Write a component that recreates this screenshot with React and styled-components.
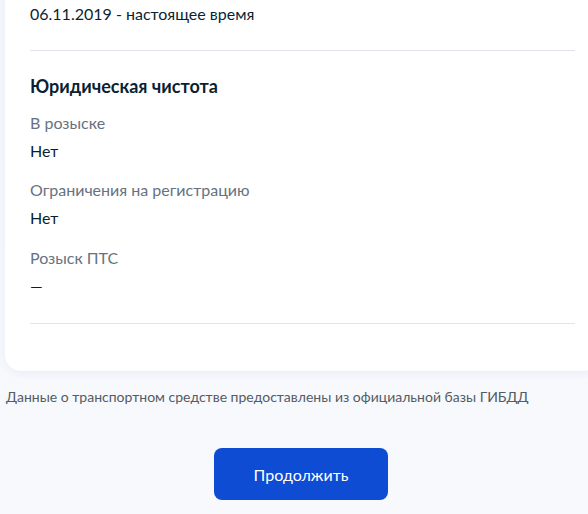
import styled, { createGlobalStyle } from 'styled-components';

const GlobalStyle = createGlobalStyle`
  html, body {
    margin: 0;
    padding: 0;
    overflow: hidden;
  }
  body {
    background: linear-gradient(180deg, #f5f7fb 0%, #f7f9fd 100%);
    font-family: Lato, 'Noto Sans', sans-serif;
    color: #0b1f33;
    width: 588px;
    height: 514px;
  }
`;

const Page = styled.main`
  display: flex;
  flex-direction: column;
  width: 588px;
`;

const Card = styled.section`
  margin: -22px 0 0 5px;
  width: 545px;
  padding: 24px 24px 47px 25px;
  background: #ffffff;
  border-radius: 0 0 16px 16px;
  box-shadow: 0 2px 10px rgba(14, 52, 112, 0.06);
  flex-shrink: 0;
`;

const Value = styled.div`
  font-size: 16px;
  line-height: 24px;
  color: #0b1f33;
  margin-top: ${(p) => p.$gap || 0}px;
`;

const Label = styled.div`
  font-size: 16px;
  line-height: 24px;
  color: #66727f;
  margin-top: ${(p) => p.$gap || 0}px;
`;

const Divider = styled.hr`
  border: 0;
  height: 1px;
  background: #e1e5eb;
  margin: ${(p) => p.$gap || 24}px 0 0;
`;

const Title = styled.h3`
  margin: 23px 0 0;
  font-size: 18px;
  line-height: 24px;
  font-weight: 700;
  color: #0b1f33;
`;

const Note = styled.p`
  margin: 16px 0 0 6px;
  font-size: 14px;
  line-height: 20px;
  color: #535b63;
`;

const Actions = styled.div`
  display: flex;
  justify-content: center;
  padding: 41px 0 0 14px;
`;

const Button = styled.button`
  width: 174px;
  height: 52px;
  border: 0;
  border-radius: 8px;
  background: #0d4cd3;
  color: #ffffff;
  font-family: Lato, 'Noto Sans', sans-serif;
  font-size: 16px;
  cursor: pointer;
`;

export default function App() {
  return (
    <Page>
      <GlobalStyle />
      <Card>
        <Value>06.11.2019 - настоящее время</Value>
        <Divider />
        <Title>Юридическая чистота</Title>
        <Label $gap={13}>В розыске</Label>
        <Value $gap={4}>Нет</Value>
        <Label $gap={15}>Ограничения на регистрацию</Label>
        <Value $gap={4}>Нет</Value>
        <Label $gap={16}>Розыск ПТС</Label>
        <Value $gap={4}>—</Value>
        <Divider $gap={25} />
      </Card>
      <Note>Данные о транспортном средстве предоставлены из официальной базы ГИБДД</Note>
      <Actions>
        <Button>Продолжить</Button>
      </Actions>
    </Page>
  );
}
